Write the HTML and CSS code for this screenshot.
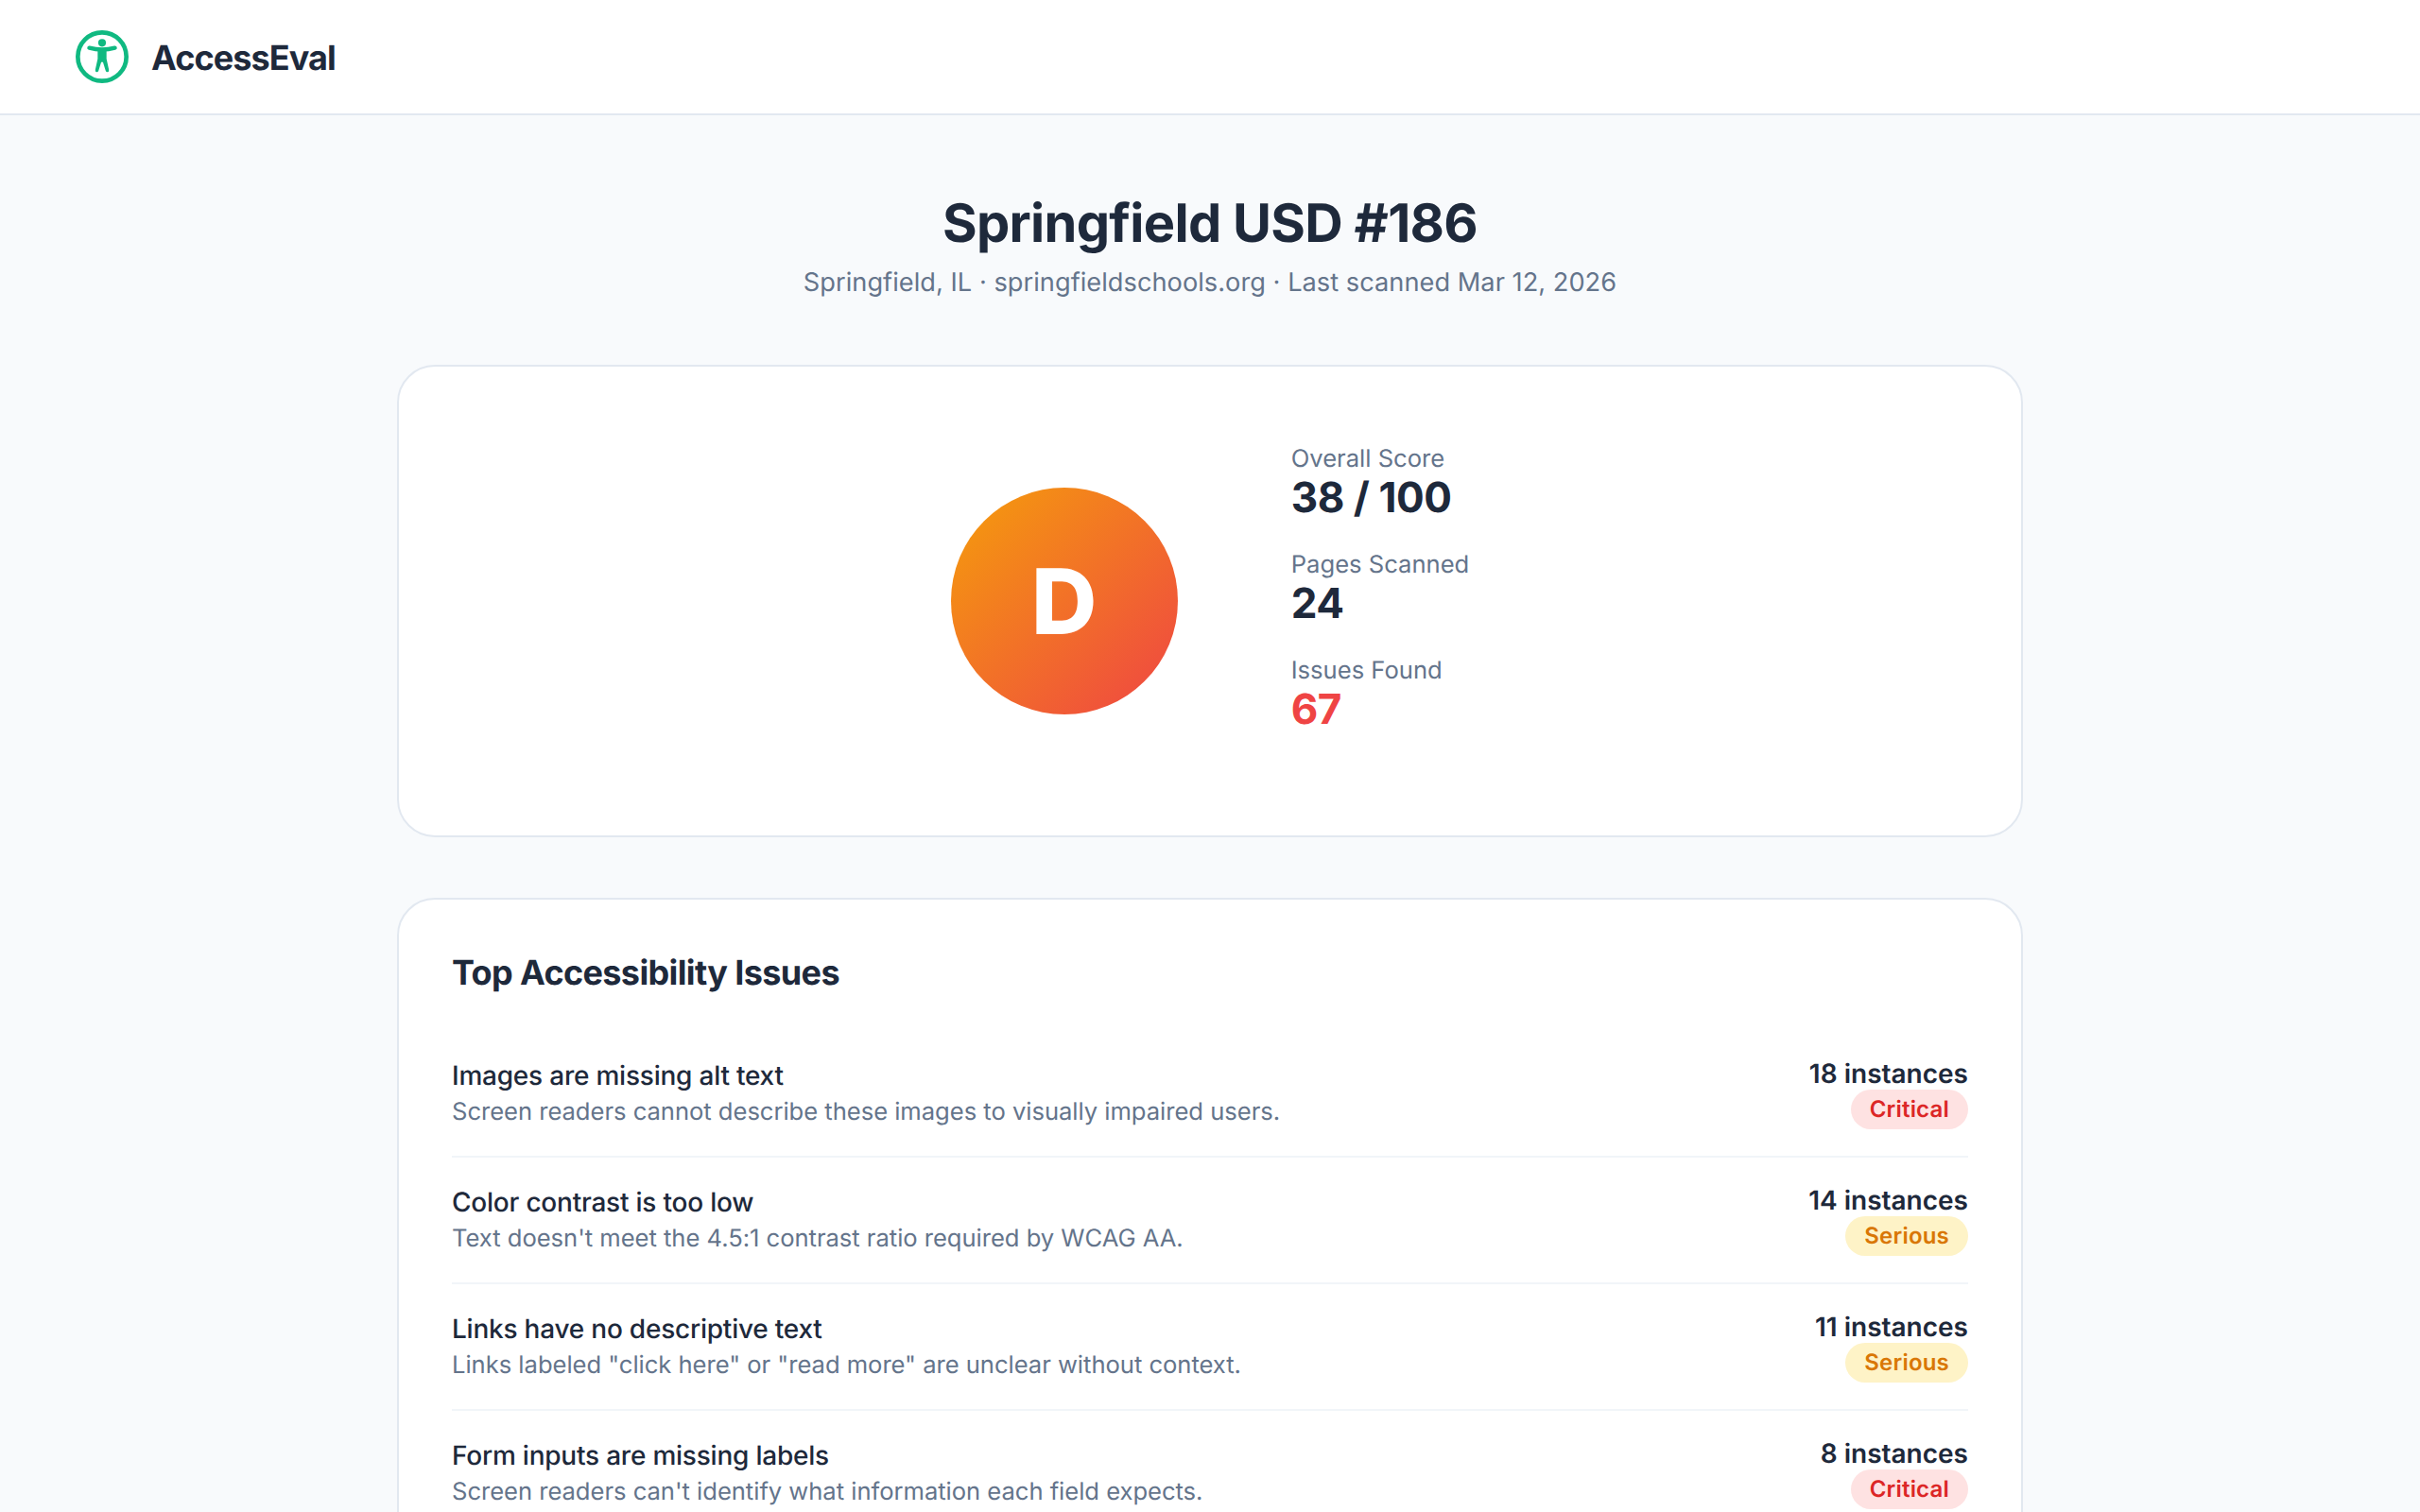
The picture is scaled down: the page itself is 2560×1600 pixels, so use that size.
FILE: index.html
```html
<!DOCTYPE html>
<html lang="en">
<head>
<meta charset="utf-8">
<title>AccessEval</title>
<link rel="stylesheet" href="styles.css">
</head>
<body>
<header class="topbar">
  <svg class="logo" viewBox="0 0 24 24" aria-hidden="true">
    <circle cx="12" cy="12" r="11" fill="none" stroke="#10b981" stroke-width="2"/>
    <circle cx="12" cy="5.7" r="1.75" fill="#10b981"/>
    <path d="M6.2 8 Q12 9.6 17.8 8" fill="none" stroke="#10b981" stroke-width="1.9" stroke-linecap="round"/>
    <path d="M10 8.8 H14 V13 L15.1 18 Q15.2 19 14.4 19 Q13.8 19 13.6 18.3 L12.4 14.5 H11.6 L10.4 18.3 Q10.2 19 9.6 19 Q8.8 19 8.9 18 L10 13 Z" fill="#10b981"/>
  </svg>
  <span class="brand">AccessEval</span>
</header>
<main class="page">
  <div class="heading">
    <h1>Springfield USD #186</h1>
    <p>Springfield, IL · springfieldschools.org · Last scanned Mar 12, 2026</p>
  </div>
  <section class="card score-card">
    <div class="grade">D</div>
    <div class="stats">
      <div class="stat"><div class="stat-label">Overall Score</div><div class="stat-value">38 / 100</div></div>
      <div class="stat"><div class="stat-label">Pages Scanned</div><div class="stat-value">24</div></div>
      <div class="stat"><div class="stat-label">Issues Found</div><div class="stat-value danger">67</div></div>
    </div>
  </section>
  <section class="card issues-card">
    <h2>Top Accessibility Issues</h2>
    <div class="issue">
      <div><div class="issue-title">Images are missing alt text</div><div class="issue-desc">Screen readers cannot describe these images to visually impaired users.</div></div>
      <div class="issue-side"><div class="count">18 instances</div><span class="badge critical">Critical</span></div>
    </div>
    <div class="issue">
      <div><div class="issue-title">Color contrast is too low</div><div class="issue-desc">Text doesn't meet the 4.5:1 contrast ratio required by WCAG AA.</div></div>
      <div class="issue-side"><div class="count">14 instances</div><span class="badge serious">Serious</span></div>
    </div>
    <div class="issue">
      <div><div class="issue-title">Links have no descriptive text</div><div class="issue-desc">Links labeled "click here" or "read more" are unclear without context.</div></div>
      <div class="issue-side"><div class="count">11 instances</div><span class="badge serious">Serious</span></div>
    </div>
    <div class="issue">
      <div><div class="issue-title">Form inputs are missing labels</div><div class="issue-desc">Screen readers can't identify what information each field expects.</div></div>
      <div class="issue-side"><div class="count">8 instances</div><span class="badge critical">Critical</span></div>
    </div>
  </section>
</main>
</body>
</html>
```
FILE: styles.css
```css
* { box-sizing: border-box; }
html, body { margin: 0; height: 1600px; overflow: hidden; }
body { background: #f8fafc; color: #1e293b; font-family: Inter, "Liberation Sans", sans-serif; text-rendering: geometricPrecision; }
.topbar { height: 122px; background: #fff; border-bottom: 2px solid #e2e8f0; padding: 0 80px; display: flex; align-items: center; gap: 24px; }
.logo { width: 56px; height: 56px; flex: none; }
.brand { margin-top: 2px; font-size: 36px; font-weight: 700; line-height: 46px; letter-spacing: -0.9px; }
.page { width: 1720px; margin: 0 auto; padding-top: 80px; }
.heading { text-align: center; margin-bottom: 66px; }
h1 { margin: 0 0 8px; font-size: 56px; font-weight: 700; line-height: 68px; letter-spacing: -0.72px; }
.heading p { margin: 0; font-size: 27.2px; line-height: 42px; letter-spacing: 0.03px; color: #64748b; }
.card { background: #fff; border: 2px solid #e2e8f0; border-radius: 40px; }
.score-card { display: flex; justify-content: center; align-items: center; gap: 120px; padding: 80px 64px; margin-bottom: 64px; }
.grade { width: 240px; height: 240px; border-radius: 50%; background: linear-gradient(135deg, #f59e0b, #ef4444); color: #fff; display: flex; align-items: center; justify-content: center; font-size: 96px; font-weight: 800; padding-top: 2px; }
.stat { margin-bottom: 30px; }
.stat-label { font-size: 25.6px; line-height: 35px; color: #64748b; }
.stat-value { font-size: 44px; font-weight: 700; line-height: 47px; letter-spacing: -0.44px; }
.danger { color: #ef4444; }
.issues-card { padding: 55px 56px 56px; }
h2 { margin: 0 0 40px; font-size: 36px; font-weight: 700; line-height: 44px; letter-spacing: -0.63px; }
.issue { display: flex; justify-content: space-between; align-items: center; padding: 28px 0; border-bottom: 2px solid #f1f5f9; }
.issue-title { font-size: 28px; font-weight: 500; line-height: 38px; letter-spacing: -0.22px; }
.issue-desc { font-size: 25.6px; line-height: 36px; letter-spacing: -0.03px; color: #64748b; margin-top: 2px; }
.issue-side { text-align: right; }
.count { font-size: 28px; font-weight: 600; line-height: 34px; }
.badge { display: inline-block; padding: 4px 20px; border-radius: 999px; font-size: 24px; font-weight: 600; line-height: 34px; letter-spacing: 0.2px; vertical-align: top; }
.critical { background: #fee2e2; color: #dc2626; }
.serious { background: #fef3c7; color: #d97706; }
```
